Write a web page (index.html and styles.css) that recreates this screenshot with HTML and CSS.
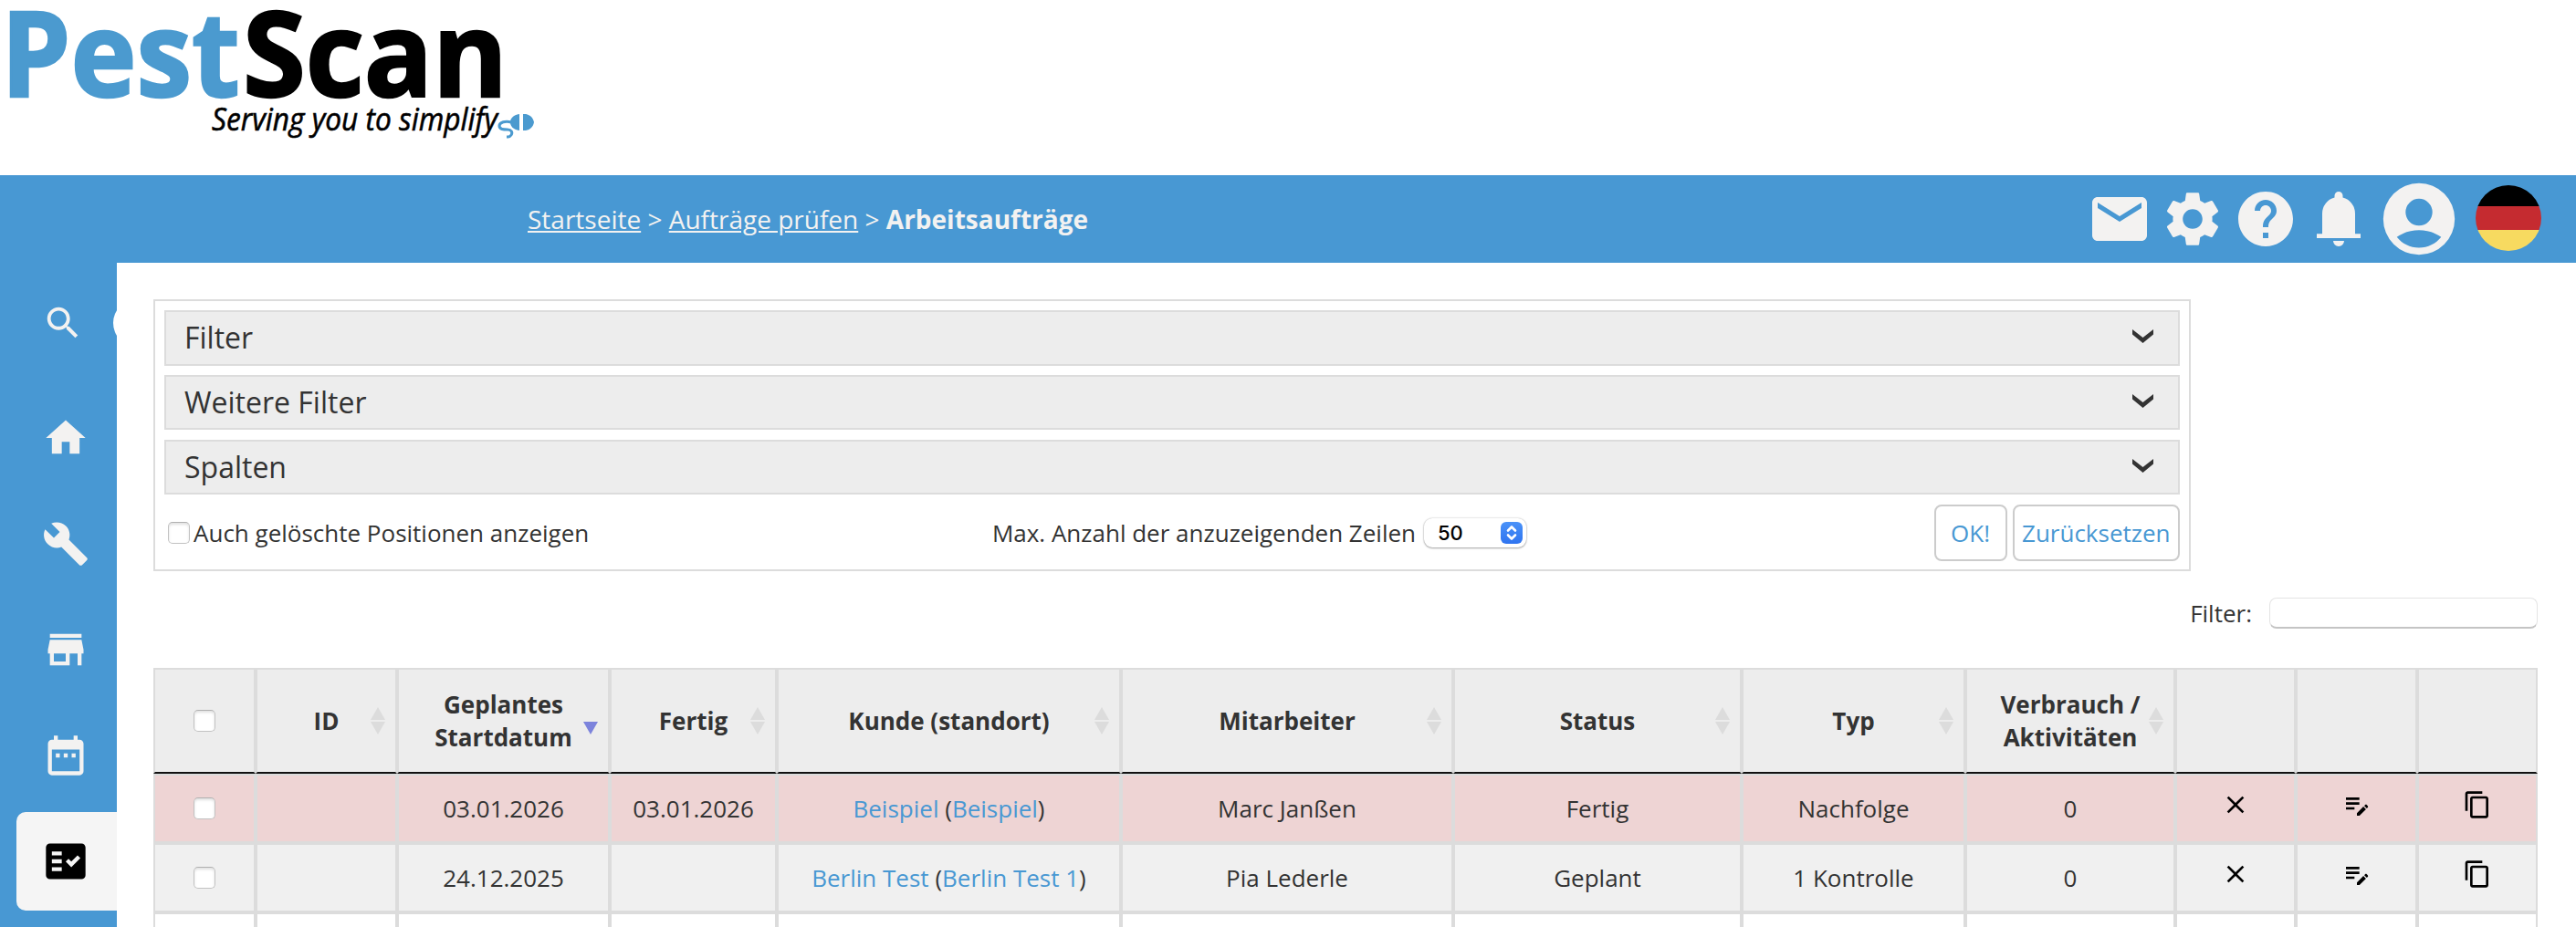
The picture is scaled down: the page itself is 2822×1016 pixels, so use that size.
FILE: index.html
```html
<!DOCTYPE html>
<html lang="de">
<head>
<meta charset="utf-8">
<meta name="viewport" content="width=device-width, initial-scale=1">
<title>PestScan - Arbeitsaufträge</title>
<link rel="stylesheet" href="styles.css">
</head>
<body>
<svg class="sprite" aria-hidden="true">
  <symbol id="i-mail" viewBox="0 0 24 24"><path d="M20 4H4c-1.1 0-2 .9-2 2v12c0 1.1.9 2 2 2h16c1.1 0 2-.9 2-2V6c0-1.1-.9-2-2-2zm0 4l-8 5-8-5V6l8 5 8-5z"/></symbol>
  <symbol id="i-gear" viewBox="0 0 24 24"><path d="M19.14 12.94c.04-.3.06-.61.06-.94 0-.32-.02-.64-.07-.94l2.03-1.58c.18-.14.23-.41.12-.61l-1.92-3.32c-.12-.22-.37-.29-.59-.22l-2.39.96c-.5-.38-1.03-.7-1.62-.94l-.36-2.54c-.04-.24-.24-.41-.48-.41h-3.84c-.24 0-.43.17-.47.41l-.36 2.54c-.59.24-1.13.57-1.62.94l-2.39-.96c-.22-.08-.47 0-.59.22L2.74 8.87c-.12.21-.08.47.12.61l2.03 1.58c-.05.3-.09.63-.09.94s.02.64.07.94l-2.03 1.58c-.18.14-.23.41-.12.61l1.92 3.32c.12.22.37.29.59.22l2.39-.96c.5.38 1.03.7 1.62.94l.36 2.54c.05.24.24.41.48.41h3.84c.24 0 .44-.17.47-.41l.36-2.54c.59-.24 1.13-.56 1.62-.94l2.39.96c.22.08.47 0 .59-.22l1.92-3.32c.12-.22.07-.47-.12-.61l-2.01-1.58zM12 15.6c-1.98 0-3.6-1.62-3.6-3.6s1.62-3.6 3.6-3.6 3.6 1.62 3.6 3.6-1.62 3.6-3.6 3.6z"/></symbol>
  <symbol id="i-help" viewBox="0 0 24 24"><path d="M12 2C6.48 2 2 6.48 2 12s4.48 10 10 10 10-4.48 10-10S17.52 2 12 2zm1 17h-2v-2h2v2zm2.07-7.75l-.9.92C13.45 12.9 13 13.5 13 15h-2v-.5c0-1.1.45-2.1 1.17-2.83l1.24-1.26c.37-.36.59-.86.59-1.41 0-1.1-.9-2-2-2s-2 .9-2 2H8c0-2.21 1.79-4 4-4s4 1.79 4 4c0 .88-.36 1.68-.93 2.25z"/></symbol>
  <symbol id="i-bell" viewBox="0 0 24 24"><path d="M4 19v-1.6h2V10q0-2.075 1.25-3.687T10.5 4.2v-.7q0-.625.438-1.062T12 2t1.063.438T13.5 3.5v.7q2 .5 3.25 2.113T18 10v7.4h2V19zm8 3q-.825 0-1.412-.587T10 20h4q0 .825-.587 1.413T12 22"/></symbol>
  <symbol id="i-user" viewBox="0 0 24 24"><path fill-rule="evenodd" d="M12 2a10 10 0 1 0 0 20 10 10 0 0 0 0-20zM12 6.35a3.75 3.75 0 1 1 0 7.5 3.75 3.75 0 0 1 0-7.5zM12 20.05c-2.5 0-4.75-1.15-6.2-3 1.8-1.25 3.9-1.9 6.2-1.9s4.4.65 6.2 1.9c-1.45 1.85-3.7 3-6.2 3z"/></symbol>
  <symbol id="i-search" viewBox="0 0 24 24"><path d="M15.5 14h-.79l-.28-.27C15.41 12.59 16 11.11 16 9.5 16 5.91 13.09 3 9.5 3S3 5.91 3 9.5 5.91 16 9.5 16c1.61 0 3.09-.59 4.23-1.57l.27.28v.79l5 4.99L20.49 19l-4.99-5zm-6 0C7.01 14 5 11.99 5 9.5S7.01 5 9.5 5 14 7.01 14 9.5 11.99 14 9.5 14z"/></symbol>
  <symbol id="i-home" viewBox="0 0 24 24"><path d="M10 20v-6h4v6h5v-8h3L12 3 2 12h3v8z"/></symbol>
  <symbol id="i-build" viewBox="0 0 24 24"><path d="M22.7 19l-9.1-9.1c.9-2.3.4-5-1.5-6.9-2-2-5-2.4-7.4-1.3L9 6 6 9 1.6 4.7C.4 7.1.9 10.1 2.9 12.1c1.9 1.9 4.6 2.4 6.9 1.5l9.1 9.1c.4.4 1 .4 1.4 0l2.3-2.3c.5-.4.5-1.1.1-1.4z"/></symbol>
  <symbol id="i-store" viewBox="0 0 24 24"><path d="M20 4H4v2h16V4zm1 10v-2l-1-5H4l-1 5v2h1v6h10v-6h4v6h2v-6h1zm-9 4H6v-4h6v4z"/></symbol>
  <symbol id="i-date" viewBox="0 0 24 24"><path d="M9 11H7v2h2v-2zm4 0h-2v2h2v-2zm4 0h-2v2h2v-2zm2-7h-1V2h-2v2H8V2H6v2H5c-1.11 0-1.99.9-1.99 2L3 20c0 1.1.89 2 2 2h14c1.1 0 2-.9 2-2V6c0-1.1-.9-2-2-2zm0 16H5V9h14v11z"/></symbol>
  <symbol id="i-check" viewBox="0 0 24 24"><path d="M20 3H4c-1.1 0-2 .9-2 2v14c0 1.1.9 2 2 2h16c1.1 0 2-.9 2-2V5c0-1.1-.9-2-2-2zM10 17H5v-2h5v2zm0-4H5v-2h5v2zm0-4H5V7h5v2zm4.82 6L12 12.16l1.41-1.41 1.41 1.42L17.99 9l1.42 1.42L14.82 15z"/></symbol>
  <symbol id="i-clear" viewBox="0 0 24 24"><path d="M19 6.41L17.59 5 12 10.59 6.41 5 5 6.41 10.59 12 5 17.59 6.41 19 12 13.41 17.59 19 19 17.59 13.41 12z"/></symbol>
  <symbol id="i-edit" viewBox="0 0 24 24"><path d="M3 10h11v2H3v-2zm0-2h11V6H3v2zm0 8h7v-2H3v2zm15.01-3.13l.71-.71c.39-.39 1.02-.39 1.41 0l.71.71c.39.39.39 1.02 0 1.41l-.71.71-2.12-2.12zm-.71.71l-5.3 5.3V21h2.12l5.3-5.3-2.12-2.12z"/></symbol>
  <symbol id="i-copy" viewBox="0 0 24 24"><path d="M16 1H4c-1.1 0-2 .9-2 2v14h2V3h12V1zm3 4H8c-1.1 0-2 .9-2 2v14c0 1.1.9 2 2 2h11c1.1 0 2-.9 2-2V7c0-1.1-.9-2-2-2zm0 16H8V7h11v14z"/></symbol>
  <symbol id="i-chev" viewBox="0 0 23 15"><path d="M0 0l11.5 9L23 0v5.500L11.500 15 0 5.500z"/></symbol>
</svg>

<div class="logo">
  <svg width="600" height="192" viewBox="0 0 600 192" role="img" aria-label="PestScan">
    <text class="logo-a" x="1" y="106" textLength="262" lengthAdjust="spacingAndGlyphs">Pest</text>
    <text class="logo-b" x="266" y="106" textLength="290" lengthAdjust="spacingAndGlyphs">Scan</text>
    <text class="logo-c" x="232" y="142.500" textLength="313" lengthAdjust="spacingAndGlyphs">Serving you to simplify</text>
    <g class="logo-plug">
      <path d="M569 125v18c-7-1-10-5-10-9s3-8 10-9zM573 125h3c5 1 8 4 9 9-1 5-4 8-9 9h-3z"/>
      <path class="cord" d="M560 134c-6-2-13 0-13 4s5 4 9 4 6 3 4 6-3 2-5 2"/>
    </g>
  </svg>
</div>

<header class="topbar">
  <nav class="crumbs"><a href="#">Startseite</a> &gt; <a href="#">Aufträge prüfen</a> &gt; <b>Arbeitsaufträge</b></nav>
  <div class="tools">
    <svg class="tool"><use href="#i-mail"/></svg>
    <svg class="tool"><use href="#i-gear"/></svg>
    <svg class="tool"><use href="#i-help"/></svg>
    <svg class="tool"><use href="#i-bell"/></svg>
    <svg class="tool user"><use href="#i-user"/></svg>
    <span class="flag"></span>
  </div>
</header>

<div class="page">
  <aside class="side">
    <div class="search"><svg><use href="#i-search"/></svg><span class="knob"></span></div>
    <a class="item" href="#"><svg><use href="#i-home"/></svg></a>
    <a class="item" href="#"><svg><use href="#i-build"/></svg></a>
    <a class="item" href="#"><svg><use href="#i-store"/></svg></a>
    <a class="item" href="#"><svg><use href="#i-date"/></svg></a>
    <a class="item active" href="#"><svg><use href="#i-check"/></svg></a>
  </aside>

  <main class="content">
    <section class="panel">
      <div class="acc">Filter<svg><use href="#i-chev"/></svg></div>
      <div class="acc">Weitere Filter<svg><use href="#i-chev"/></svg></div>
      <div class="acc">Spalten<svg><use href="#i-chev"/></svg></div>
      <div class="opts">
        <label class="deleted"><input type="checkbox" class="cb">Auch gelöschte Positionen anzeigen</label>
        <div class="max">Max. Anzahl der anzuzeigenden Zeilen
          <span class="select">50
            <svg viewBox="0 0 24 24"><path d="M8 9.500l4-4 4 4M8 14.500l4 4 4-4"/></svg>
          </span>
        </div>
        <div class="btns"><button class="btn ok">OK!</button><button class="btn">Zurücksetzen</button></div>
      </div>
    </section>

    <div class="search-row"><label for="q">Filter:</label><input id="q" type="text"></div>

    <table class="grid">
      <colgroup>
        <col class="c1"><col class="c2"><col class="c3"><col class="c4"><col class="c5"><col class="c6">
        <col class="c7"><col class="c8"><col class="c9"><col class="c10"><col class="c11"><col class="c12">
      </colgroup>
      <thead>
        <tr>
          <th><input type="checkbox" class="cb"></th>
          <th class="sort">ID</th>
          <th class="sort desc">Geplantes<br>Startdatum</th>
          <th class="sort">Fertig</th>
          <th class="sort">Kunde (standort)</th>
          <th class="sort">Mitarbeiter</th>
          <th class="sort">Status</th>
          <th class="sort">Typ</th>
          <th class="sort">Verbrauch /<br>Aktivitäten</th>
          <th></th>
          <th></th>
          <th></th>
        </tr>
      </thead>
      <tbody>
        <tr class="late">
          <td><input type="checkbox" class="cb"></td>
          <td></td>
          <td>03.01.2026</td>
          <td>03.01.2026</td>
          <td><a href="#">Beispiel</a> (<a href="#">Beispiel</a>)</td>
          <td>Marc Janßen</td>
          <td>Fertig</td>
          <td>Nachfolge</td>
          <td>0</td>
          <td><svg><use href="#i-clear"/></svg></td>
          <td><svg><use href="#i-edit"/></svg></td>
          <td><svg><use href="#i-copy"/></svg></td>
        </tr>
        <tr class="even">
          <td><input type="checkbox" class="cb"></td>
          <td></td>
          <td>24.12.2025</td>
          <td></td>
          <td><a href="#">Berlin Test</a> (<a href="#">Berlin Test 1</a>)</td>
          <td>Pia Lederle</td>
          <td>Geplant</td>
          <td>1 Kontrolle</td>
          <td>0</td>
          <td><svg><use href="#i-clear"/></svg></td>
          <td><svg><use href="#i-edit"/></svg></td>
          <td><svg><use href="#i-copy"/></svg></td>
        </tr>
        <tr>
          <td></td><td></td><td></td><td></td><td></td><td></td><td></td><td></td><td></td><td></td><td></td><td></td>
        </tr>
      </tbody>
    </table>
  </main>
</div>
</body>
</html>
```
FILE: styles.css
```css
*{ box-sizing:border-box; }
html,body{ margin:0; height:100%; overflow:hidden; }
body{ display:flex; flex-direction:column; background:#fff; color:#333; font-family:"Open Sans","Noto Sans",sans-serif; font-size:26px; line-height:36px; }
a{ color:#4898d3; text-decoration:none; }
svg{ display:block; fill:currentColor; }
.sprite{ display:none; }

/* logo */
.logo{ flex:0 0 192px; height:192px; }
.logo text{ font-family:"Open Sans","Noto Sans",sans-serif; }
.logo-a,.logo-b{ font-size:129px; font-weight:700; stroke-width:2.5; }
.logo-a{ fill:#4b9acf; stroke:#4b9acf; }
.logo-b{ fill:#000; stroke:#000; }
.logo-c{ font-size:34px; font-style:italic; fill:#000; stroke:#000; stroke-width:.6; }
.logo-plug{ fill:#4b9acf; }
.logo-plug .cord{ fill:none; stroke:#4b9acf; stroke-width:3; }

/* top bar */
.topbar{ flex:0 0 96px; display:flex; align-items:center; justify-content:space-between; background:#4898d3; color:#f3f2f1; padding:0 38px 0 578px; }
.crumbs{ font-size:28px; }
.crumbs a{ color:inherit; text-decoration:underline; }
.tools{ display:flex; align-items:center; }
.tool{ width:72px; height:72px; margin-right:8px; }
.tool.user{ width:94px; height:94px; margin:0 15px 0 -3px; }
.flag{ width:72px; height:72px; margin-bottom:2px; border-radius:50%; background:linear-gradient(#000 23px,#c52b30 23px,#c52b30 49px,#f7da60 49px); }

.page{ flex:1 1 auto; display:flex; min-height:0; }

/* sidebar */
.side{ flex:0 0 128px; display:flex; flex-direction:column; background:#4898d3; color:#f3f2f1; padding-left:18px; }
.side .search{ flex:0 0 138px; position:relative; overflow:hidden; padding:43px 0 0 28px; }
.side .search svg{ width:46px; height:46px; }
.knob{ position:absolute; left:106px; top:40px; width:52px; height:52px; border-radius:50%; background:#fff; }
.item{ flex:0 0 108px; display:flex; align-items:center; margin-bottom:8px; padding-left:28px; color:inherit; border-radius:10px 0 0 10px; }
.item svg{ width:52px; height:52px; }
.item.active{ background:#f5f5f5; color:#000; }

/* content */
.content{ flex:1 1 auto; padding:40px 42px 0 40px; min-width:0; }
.panel{ width:2232px; height:298px; border:2px solid #dcdcdc; padding:10px; }
.acc{ display:flex; align-items:center; justify-content:space-between; height:60.6px; margin-bottom:10.3px; padding:0 27px 0 20px; border:2px solid #dcdcdc; background:#ededed; font-size:32px; }
.acc svg{ width:23px; height:15px; margin-bottom:4px; }
.opts{ display:grid; grid-template-columns:1fr 1fr 1fr; align-items:center; height:62px; }
.deleted{ display:flex; align-items:center; padding-left:4px; }
.deleted .cb{ margin-right:4px; }
.max{ display:flex; align-items:center; justify-content:flex-end; gap:9px; margin-right:-20px; white-space:nowrap; }
.select{ display:flex; align-items:center; justify-content:space-between; width:112px; height:32px; padding:0 4px 0 15px; border-radius:9px; background:#fff; color:#000; font:500 22px/32px Inter,sans-serif; box-shadow:0 0 2px rgba(0,0,0,.25),0 1px 2px rgba(0,0,0,.3); }
.select svg{ width:24px; height:24px; border-radius:6px; background:linear-gradient(#4a92f8,#2f74f0); fill:none; stroke:#fff; stroke-width:2.6; stroke-linecap:round; stroke-linejoin:round; }
.btns{ display:flex; justify-content:flex-end; gap:6px; }
.btn{ height:62px; padding:0 8.500px; border:2px solid #ccc; border-radius:8px; background:#fff; color:#4898d3; font:inherit; }
.btn.ok{ width:80px; }

.cb{ appearance:none; display:block; width:24px; height:24px; margin:0; border:1px solid #c2c2c2; border-top-color:#b0b0b0; border-radius:5px; background:#fff; box-shadow:inset 0 2px 3px rgba(0,0,0,.12); }

.search-row{ display:flex; align-items:center; justify-content:flex-end; gap:19px; height:106px; padding-bottom:14px; }
.search-row input{ width:294px; height:34px; border:1px solid #e4e4e4; border-bottom:2px solid #c4c4c4; border-radius:8px; background:#fff; }

/* table */
.grid{ width:2612px; table-layout:fixed; border-collapse:separate; border-spacing:0; text-align:center; }
.grid th,.grid td{ height:76px; padding:0; border:2px solid #dcdcdc; vertical-align:middle; }
.grid th{ position:relative; height:116px; background:#ededed; border-bottom-color:#111; font-weight:700; }
.grid .cb{ margin:0 auto; }
.grid td svg{ width:32px; height:32px; margin:0 auto 8px; color:#000; }
.late td{ background:#eed4d4; }
.even td{ background:#f0f0f0; }
.c1{ width:112px; } .c2{ width:155px; } .c3{ width:233px; } .c4{ width:183px; }
.c5{ width:377px; } .c6{ width:364px; } .c7{ width:316px; } .c8{ width:245px; }
.c9{ width:230px; } .c10{ width:132px; } .c11{ width:133px; } .c12{ width:132px; }

/* sort arrows */
.sort::before,.sort::after{ content:""; position:absolute; right:11px; border:8px solid transparent; }
.sort::before{ top:41px; border-top:0; border-bottom:14px solid #dcdcdc; }
.sort::after{ top:57px; border-bottom:0; border-top:14px solid #dcdcdc; }
.sort.desc::before{ display:none; }
.sort.desc::after{ border-top-color:#7c83dc; }
```
